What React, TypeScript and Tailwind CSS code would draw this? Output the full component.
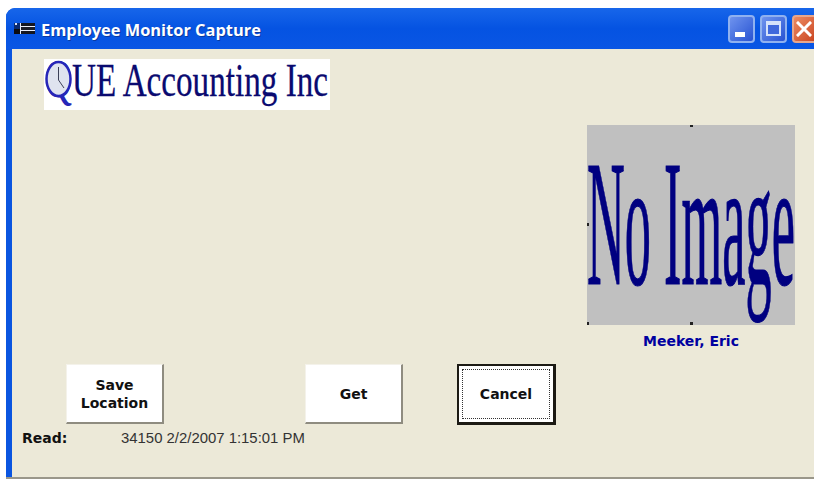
import React from "react";

const sans = "font-['DejaVu_Sans',sans-serif]";

// Small list-style glyph used as the form's system icon
function FormIcon() {
  return (
    <svg width="21" height="11" viewBox="0 0 21 11" className="shrink-0">
      <rect x="0" y="0" width="21" height="11" fill="#e8edf8" />
      <rect x="0" y="0" width="6" height="7" fill="#0a2a70" />
      <rect x="0" y="6" width="6" height="5" fill="#0c0c10" />
      <rect x="1" y="0" width="2" height="2" fill="#dfe6f6" />
      <rect x="7" y="0" width="14" height="3" fill="#14161e" />
      <rect x="7" y="4" width="14" height="3" fill="#1c1e28" />
      <rect x="7" y="8" width="14" height="3" fill="#14161e" />
    </svg>
  );
}

function MinimizeButton() {
  return (
    <div className="w-[27px] h-[28px] rounded-[4px] border-2 border-[#8fb1f0] bg-gradient-to-br from-[#6f93ee] to-[#2a52d2] flex items-end pl-[5px] pb-[4px]">
      <div className="w-[10px] h-[5px] bg-white" />
    </div>
  );
}

function MaximizeButton() {
  return (
    <div className="w-[27px] h-[28px] rounded-[4px] border-2 border-[#8fb1f0] bg-gradient-to-br from-[#6f93ee] to-[#2a52d2] flex items-center justify-center">
      <div className="w-[15px] h-[15px] border-2 border-t-[4px] border-[#d5e2fa] bg-[#3f68dc]" />
    </div>
  );
}

function CloseButton() {
  return (
    <div className="w-[27px] h-[28px] -mr-[5px] rounded-[4px] border-2 border-[#e8a78c] bg-gradient-to-br from-[#ec8a62] to-[#c8401a] flex items-center pl-[2px]">
      <svg width="16" height="16" viewBox="0 0 16 16">
        <path d="M2 2 L14 14 M14 2 L2 14" stroke="#fff" strokeWidth="3" strokeLinecap="square" />
      </svg>
    </div>
  );
}

function FormButton({ children, focused }: { children: React.ReactNode; focused?: boolean }) {
  if (focused) {
    return (
      <button className={`w-[99px] h-[61px] bg-white border-2 border-[#1c1a14] border-b-[3px] border-r-[3px] p-[3px] ${sans} text-[14px] leading-[18px] font-bold text-[#111]`}>
        <div className="w-full h-full border border-dotted border-[#333] flex items-center justify-center">
          {children}
        </div>
      </button>
    );
  }
  return (
    <button className={`w-[98px] h-[60px] bg-white border border-[#f4f2ea] border-b-[2px] border-r-[2px] border-b-[#8f8c80] border-r-[#8f8c80] ${sans} text-[14px] leading-[18px] font-bold text-[#111] flex items-center justify-center text-center`}>
      {children}
    </button>
  );
}

// Company banner: a clock face sits inside the Q of the name
function CompanyLogo() {
  return (
    <svg width="286" height="51" viewBox="0 0 286 51" className="block bg-white">
      <text
        x="1"
        y="38"
        fontFamily="Liberation Serif"
        fontSize="54"
        textLength="27"
        lengthAdjust="spacingAndGlyphs"
        fill="#2626b8"
      >
        Q
      </text>
      <ellipse cx="14.5" cy="20" rx="12" ry="17" fill="#dfe3ef" stroke="#2626b8" strokeWidth="2.5" />
      <path d="M14.5 8 V21 L20 29" stroke="#3c4058" strokeWidth="1" fill="none" />
      <text
        x="28"
        y="37"
        fontFamily="Liberation Serif"
        fontSize="47"
        textLength="256"
        lengthAdjust="spacingAndGlyphs"
        fill="#0a0a70"
        stroke="#0a0a70"
        strokeWidth="0.3"
      >
        UE Accounting Inc
      </text>
    </svg>
  );
}

// Placeholder shown when an employee has no photo on file
function NoImagePlaceholder() {
  return (
    <svg width="208" height="200" viewBox="0 0 208 200" className="block bg-[#c0c0c0]">
      <text
        x="0"
        y="159"
        fontFamily="Liberation Serif"
        fontSize="181"
        textLength="208"
        lengthAdjust="spacingAndGlyphs"
        fill="#000080"
        stroke="#000080"
        strokeWidth="1.2"
      >
        No Image
      </text>
      <rect x="103" y="0" width="3" height="2" fill="#222" />
      <rect x="0" y="98" width="2" height="3" fill="#222" />
      <rect x="103" y="197" width="3" height="3" fill="#222" />
      <rect x="0" y="197" width="2" height="3" fill="#222" />
    </svg>
  );
}

export default function App() {
  return (
    <div className="w-[814px] h-[479px] bg-white overflow-hidden pl-[6px] pt-[8px]">
      <div className="w-[808px] h-[471px] rounded-tl-[9px] bg-[#0a55e0] flex flex-col border-b-[2px] border-[#9a978a]">
        {/* title bar */}
        <div className="h-[41px] shrink-0 rounded-tl-[9px] bg-gradient-to-b from-[#1766ea] via-[#0553e2] to-[#0a56e4] flex items-center justify-between pl-[8px]">
          <div className="flex items-center gap-[6px]">
            <FormIcon />
            <span className="pt-[4px] font-['Open_Sans',sans-serif] text-[16.4px] font-bold text-white leading-none [text-shadow:1px_1px_0_#0a3aa0]">
              Employee Monitor Capture
            </span>
          </div>
          <div className="flex items-center gap-[5px]">
            <MinimizeButton />
            <MaximizeButton />
            <CloseButton />
          </div>
        </div>

        {/* form body */}
        <div className="flex-1 ml-[6px] bg-[#ece9d8] flex flex-col">
          <div className="pl-[32px] pt-[10px]">
            <CompanyLogo />
          </div>

          <div className="self-end mr-[19px] mt-[15px] w-[208px] flex flex-col">
            <NoImagePlaceholder />
            <div className={`mt-[8px] h-[16px] ${sans} text-[14px] leading-[16px] font-bold text-[#0000a0] text-center whitespace-nowrap`}>
              Meeker, Eric
            </div>
          </div>

          <div className="mt-[15px] pl-[54px] flex items-start">
            <FormButton>
              <span>
                Save
                <br />
                Location
              </span>
            </FormButton>
            <div className="ml-[141px]">
              <FormButton>Get</FormButton>
            </div>
            <div className="ml-[54px]">
              <FormButton focused>Cancel</FormButton>
            </div>
          </div>

          <div className="mt-[5px] pl-[10px] flex items-center h-[16px]">
            <span className={`w-[99px] ${sans} text-[14px] font-bold text-[#111]`}>Read:</span>
            <span className="font-['Liberation_Sans',sans-serif] text-[14.9px] text-[#333]">
              34150 2/2/2007 1:15:01 PM
            </span>
          </div>
        </div>
      </div>
    </div>
  );
}
